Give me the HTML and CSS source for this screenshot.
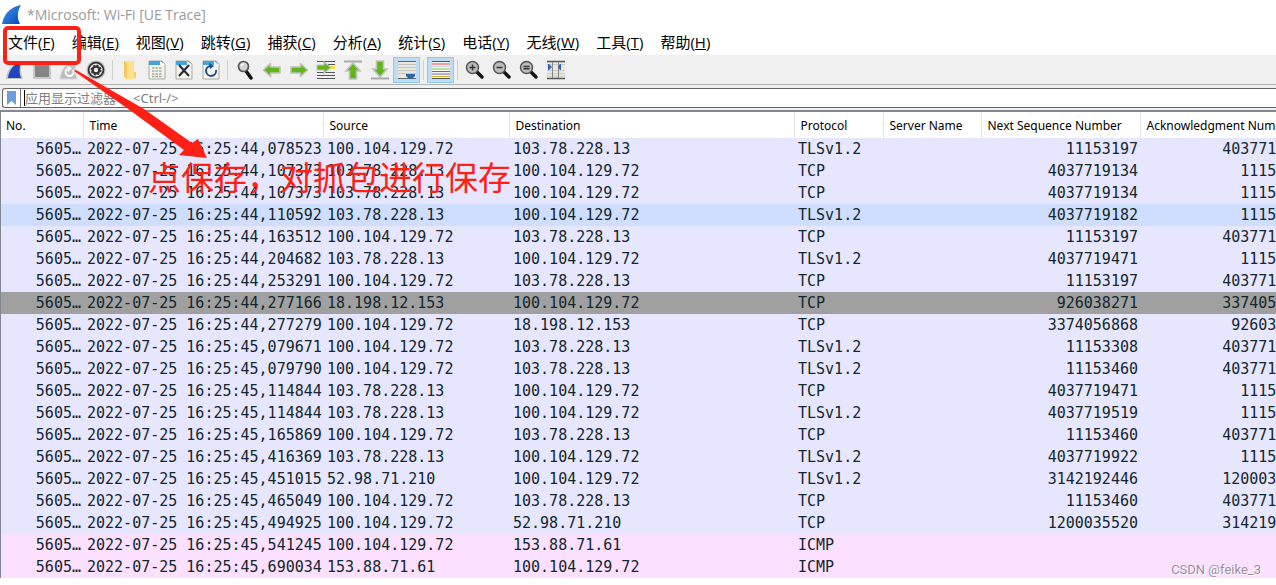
FILE: index.html
```
<!DOCTYPE html>
<html lang="zh-CN">
<head>
<meta charset="utf-8">
<title>*Microsoft: Wi-Fi [UE Trace]</title>
<link rel="stylesheet" href="styles.css">
</head>
<body>
<div class="app">
  <header class="titlebar">
    <svg class="logo" width="20" height="20" viewBox="0 0 20 20" aria-hidden="true">
      <defs><linearGradient id="fin" x1="0" y1="0" x2="1" y2="1"><stop offset="0" stop-color="#3f9bea"/><stop offset="1" stop-color="#0a45b8"/></linearGradient></defs>
      <path d="M0 19C2 9 8 2 19 0C15 7 15 13 18 19Z" fill="url(#fin)"/>
    </svg>
    <h1 class="title">*Microsoft: Wi-Fi [UE Trace]</h1>
  </header>

  <nav class="menubar">
    <button class="menu">文件(<u>F</u>)</button>
    <button class="menu">编辑(<u>E</u>)</button>
    <button class="menu">视图(<u>V</u>)</button>
    <button class="menu">跳转(<u>G</u>)</button>
    <button class="menu">捕获(<u>C</u>)</button>
    <button class="menu">分析(<u>A</u>)</button>
    <button class="menu">统计(<u>S</u>)</button>
    <button class="menu">电话(<u>Y</u>)</button>
    <button class="menu">无线(<u>W</u>)</button>
    <button class="menu">工具(<u>T</u>)</button>
    <button class="menu">帮助(<u>H</u>)</button>
  </nav>

  <div class="toolbar" role="toolbar">
    <button class="tool" aria-label="开始捕获"><svg viewBox="0 0 20 20"><path d="M1 19C2 9 8 2 18 1C15 7 16 13 18 19Z" fill="#c4c4c4"/><path d="M3 18C4 10 9 4 16 2C14 8 14 13 16 18Z" fill="#2046c0"/></svg></button>
    <button class="tool" aria-label="停止捕获"><svg viewBox="0 0 20 20"><path d="M1 1H19V19H1Z" fill="#c8c8c8"/><path d="M3 3H17V17H3Z" fill="#858585"/></svg></button>
    <button class="tool" aria-label="重新捕获"><svg viewBox="0 0 20 20"><path d="M1 19C2 9 8 2 18 1C15 7 16 13 18 19Z" fill="#bdbdbd" stroke="#d8d8d8"/><path d="M8 9A4 4 0 1 0 14 10" fill="none" stroke="#fff" stroke-width="2"/><path d="M8 6L13 8L9 12Z" fill="#fff"/></svg></button>
    <button class="tool" aria-label="捕获选项"><svg viewBox="0 0 20 20"><circle cx="10" cy="10" r="9.5" fill="#bbb"/><circle cx="10" cy="10" r="7.4" fill="#eee" stroke="#333" stroke-width="1.8"/><circle cx="10" cy="10" r="3.4" fill="none" stroke="#333" stroke-width="2.4"/><circle cx="10" cy="10" r="4.800" fill="none" stroke="#333" stroke-width="1.4" stroke-dasharray="2 1.77"/></svg></button>
    <span class="sep"></span>
    <button class="tool" aria-label="打开"><svg viewBox="0 0 20 20"><path d="M4 1H14V19H7L4 17Z" fill="#ffe08a"/><path d="M4 1L7 3V19L4 17Z" fill="#f3c75c"/><path d="M14 12H16V18H14Z" fill="#f7ce68"/></svg></button>
    <button class="tool" aria-label="保存"><svg viewBox="0 0 20 20"><use href="#doc"/><path d="M5 8H15M5 11H15M5 14H15M5 16.500H15" stroke="#a9aaa2" stroke-width="1.400" stroke-dasharray="2.500 1"/></svg></button>
    <button class="tool" aria-label="关闭"><svg viewBox="0 0 20 20"><use href="#doc"/><path d="M5 5L15 16M15 5L5 16" stroke="#24292f" stroke-width="2"/></svg></button>
    <button class="tool" aria-label="重新加载"><svg viewBox="0 0 20 20"><use href="#doc"/><path d="M9 6A5 5 0 1 0 15 10" fill="none" stroke="#1d4d86" stroke-width="2"/><path d="M8 3L13 6L9 9Z" fill="#1d4d86"/></svg></button>
    <span class="sep"></span>
    <button class="tool" aria-label="查找"><svg viewBox="0 0 20 20"><path d="M11 11L16 18" stroke="#111" stroke-width="3.500" stroke-linecap="round"/><circle cx="8.500" cy="6.500" r="5" fill="#d2d4d6" stroke="#555" stroke-width="1.700"/><path d="M6 6A3 3 0 0 1 9 4" stroke="#fff" fill="none" stroke-width="1.500"/></svg></button>
    <button class="tool" aria-label="后退"><svg viewBox="0 0 20 20"><path id="arrow" d="M1.500 10L8.500 3.500V7H18V13H8.500V16.500Z" fill="#62b51a" stroke="#bfc3bb" stroke-width="1.600" stroke-linejoin="round"/></svg></button>
    <button class="tool" aria-label="前进"><svg viewBox="0 0 20 20"><use href="#arrow" transform="rotate(180 10 10)"/></svg></button>
    <button class="tool" aria-label="转到分组"><svg viewBox="0 0 20 20"><path d="M1 1.500H19M9 4.500H19M1 12.500H19M1 15.500H19M1 18.500H19" stroke="#555"/><path d="M13 7.500H19" stroke="#ffe13c" stroke-width="3"/><path d="M1 5H8V2L15 7.500L8 13V10H1Z" fill="#62b51a" stroke="#bfc3bb" stroke-width="1.200"/></svg></button>
    <button class="tool" aria-label="首个分组"><svg viewBox="0 0 20 20"><path d="M1 1.500H19" stroke="#aaa" stroke-width="2"/><path d="M10 3L17 11H13.500V19H6.500V11H3Z" fill="#62b51a" stroke="#bfc3bb" stroke-width="1.600"/></svg></button>
    <button class="tool" aria-label="最新分组"><svg viewBox="0 0 20 20"><path d="M1 18.500H19" stroke="#aaa" stroke-width="2"/><path d="M10 17L17 9H13.500V1H6.500V9H3Z" fill="#62b51a" stroke="#bfc3bb" stroke-width="1.600"/></svg></button>
    <button class="tool on" aria-label="自动滚动" aria-pressed="true"><svg viewBox="0 0 20 20"><path d="M1 1H19V19H1Z" fill="#e8e8e2"/><path d="M1 4.500H19M1 7.500H19M1 10.500H19M1 13.500H19" stroke="#c2c4bd"/><path d="M1 1.500H19M1 18.500H19" stroke="#666"/><path d="M9 14H18V16L15 19H12L9 16Z" fill="#2d65ad"/></svg></button>
    <span class="sep"></span>
    <button class="tool on" aria-label="着色" aria-pressed="true"><svg viewBox="0 0 20 20"><path d="M1 1H19V19H1Z" fill="#f4f4f2"/><path d="M1 1.500H19M1 18.500H19" stroke="#555"/><path d="M1 4H19" stroke="#ee4b4b"/><path d="M1 6.500H19" stroke="#c9d0e8"/><path d="M1 9H19" stroke="#7ed23a"/><path d="M1 11.500H19" stroke="#4f74b5"/><path d="M1 14H19" stroke="#8a6a9e"/><path d="M1 16.500H19" stroke="#d9b22c"/></svg></button>
    <span class="sep"></span>
    <button class="tool" aria-label="放大"><svg viewBox="0 0 20 20"><use href="#lens"/><path d="M4.500 7.500H10.500M7.500 4.500V10.500" stroke="#333" stroke-width="1.500"/></svg></button>
    <button class="tool" aria-label="缩小"><svg viewBox="0 0 20 20"><use href="#lens"/><path d="M4.500 7.500H10.500" stroke="#333" stroke-width="1.500"/></svg></button>
    <button class="tool" aria-label="正常大小"><svg viewBox="0 0 20 20"><use href="#lens"/><path d="M4.500 6.500H10.500M4.500 8.800H10.500" stroke="#333" stroke-width="1.500"/></svg></button>
    <button class="tool" aria-label="调整列宽"><svg viewBox="0 0 20 20"><path d="M1 1H19V19H1Z" fill="#e8e8e2"/><path d="M1 4.500H19M1 10.500H19M1 13.500H19M1 16H19" stroke="#cccec6"/><path d="M1 1.500H19M1 18.500H19" stroke="#555" stroke-width="1.500"/><path d="M6.500 2V18M12.500 2V18" stroke="#888"/><path d="M2 4H3L6 7L3 10H2ZM15 4H14L12 7L14 10H15Z" fill="#2d65ad"/></svg></button>
  </div>

  <div class="filterbar">
    <div class="filter">
      <button class="bookmark" aria-label="书签"><svg width="9" height="14" viewBox="0 0 9 14"><path d="M0 0H9V14L4.500 10L0 14Z" fill="#6e9fd4"/></svg></button>
      <input class="filter-input" type="text" aria-label="应用显示过滤器" placeholder="应用显示过滤器 … &lt;Ctrl-/&gt;">
    </div>
  </div>

  <main class="packets">
    <table class="list">
      <colgroup><col class="c-no"><col class="c-time"><col class="c-src"><col class="c-dst"><col class="c-proto"><col class="c-server"><col class="c-seq"><col class="c-ack"></colgroup>
      <thead><tr><th>No.</th><th>Time</th><th>Source</th><th>Destination</th><th>Protocol</th><th>Server Name</th><th>Next Sequence Number</th><th>Acknowledgment Number</th></tr></thead>
      <tbody>
        <tr><td>5605…</td><td>2022-07-25 16:25:44,078523</td><td>100.104.129.72</td><td>103.78.228.13</td><td>TLSv1.2</td><td></td><td>11153197</td><td>4037719134</td></tr>
        <tr><td>5605…</td><td>2022-07-25 16:25:44,107373</td><td>103.78.228.13</td><td>100.104.129.72</td><td>TCP</td><td></td><td>4037719134</td><td>11153197</td></tr>
        <tr><td>5605…</td><td>2022-07-25 16:25:44,107373</td><td>103.78.228.13</td><td>100.104.129.72</td><td>TCP</td><td></td><td>4037719134</td><td>11153197</td></tr>
        <tr class="hover"><td>5605…</td><td>2022-07-25 16:25:44,110592</td><td>103.78.228.13</td><td>100.104.129.72</td><td>TLSv1.2</td><td></td><td>4037719182</td><td>11153197</td></tr>
        <tr><td>5605…</td><td>2022-07-25 16:25:44,163512</td><td>100.104.129.72</td><td>103.78.228.13</td><td>TCP</td><td></td><td>11153197</td><td>4037719182</td></tr>
        <tr><td>5605…</td><td>2022-07-25 16:25:44,204682</td><td>103.78.228.13</td><td>100.104.129.72</td><td>TLSv1.2</td><td></td><td>4037719471</td><td>11153197</td></tr>
        <tr><td>5605…</td><td>2022-07-25 16:25:44,253291</td><td>100.104.129.72</td><td>103.78.228.13</td><td>TCP</td><td></td><td>11153197</td><td>4037719471</td></tr>
        <tr class="syn"><td>5605…</td><td>2022-07-25 16:25:44,277166</td><td>18.198.12.153</td><td>100.104.129.72</td><td>TCP</td><td></td><td>926038271</td><td>3374056868</td></tr>
        <tr><td>5605…</td><td>2022-07-25 16:25:44,277279</td><td>100.104.129.72</td><td>18.198.12.153</td><td>TCP</td><td></td><td>3374056868</td><td>926038271</td></tr>
        <tr><td>5605…</td><td>2022-07-25 16:25:45,079671</td><td>100.104.129.72</td><td>103.78.228.13</td><td>TLSv1.2</td><td></td><td>11153308</td><td>4037719471</td></tr>
        <tr><td>5605…</td><td>2022-07-25 16:25:45,079790</td><td>100.104.129.72</td><td>103.78.228.13</td><td>TLSv1.2</td><td></td><td>11153460</td><td>4037719471</td></tr>
        <tr><td>5605…</td><td>2022-07-25 16:25:45,114844</td><td>103.78.228.13</td><td>100.104.129.72</td><td>TCP</td><td></td><td>4037719471</td><td>11153460</td></tr>
        <tr><td>5605…</td><td>2022-07-25 16:25:45,114844</td><td>103.78.228.13</td><td>100.104.129.72</td><td>TLSv1.2</td><td></td><td>4037719519</td><td>11153460</td></tr>
        <tr><td>5605…</td><td>2022-07-25 16:25:45,165869</td><td>100.104.129.72</td><td>103.78.228.13</td><td>TCP</td><td></td><td>11153460</td><td>4037719519</td></tr>
        <tr><td>5605…</td><td>2022-07-25 16:25:45,416369</td><td>103.78.228.13</td><td>100.104.129.72</td><td>TLSv1.2</td><td></td><td>4037719922</td><td>11153460</td></tr>
        <tr><td>5605…</td><td>2022-07-25 16:25:45,451015</td><td>52.98.71.210</td><td>100.104.129.72</td><td>TLSv1.2</td><td></td><td>3142192446</td><td>1200035520</td></tr>
        <tr><td>5605…</td><td>2022-07-25 16:25:45,465049</td><td>100.104.129.72</td><td>103.78.228.13</td><td>TCP</td><td></td><td>11153460</td><td>4037719922</td></tr>
        <tr><td>5605…</td><td>2022-07-25 16:25:45,494925</td><td>100.104.129.72</td><td>52.98.71.210</td><td>TCP</td><td></td><td>1200035520</td><td>3142192446</td></tr>
        <tr class="icmp"><td>5605…</td><td>2022-07-25 16:25:45,541245</td><td>100.104.129.72</td><td>153.88.71.61</td><td>ICMP</td><td></td><td></td><td></td></tr>
        <tr class="icmp"><td>5605…</td><td>2022-07-25 16:25:45,690034</td><td>153.88.71.61</td><td>100.104.129.72</td><td>ICMP</td><td></td><td></td><td></td></tr>
      </tbody>
    </table>
  </main>

  <div class="mark-box"></div>
  <svg class="mark-arrow" width="140" height="92" viewBox="70 68 140 92" aria-hidden="true"><path d="M74 71L76 70L144 109L192 143L198 139L207 158L179 155L184 150L131 111Z" fill="#ff2015"/></svg>
  <p class="mark-text">点保存，对抓包进行保存</p>
  <p class="watermark">CSDN @feike_3</p>
</div>

<svg class="defs" width="0" height="0" aria-hidden="true">
  <defs>
    <g id="doc"><path d="M2 1H15L18 4V19H2Z" fill="#f3f4ea" stroke="#a9aba5"/><path d="M2 1H15L17 5H2Z" fill="#45a3dc"/><path d="M13 1L18 5H13Z" fill="#fff"/></g>
    <g id="lens"><path d="M12 12L17 17" stroke="#151515" stroke-width="3.500" stroke-linecap="round"/><circle cx="7.500" cy="7.500" r="6" fill="#b9bbbc" stroke="#555" stroke-width="1.500"/></g>
  </defs>
</svg>
</body>
</html>
```
FILE: styles.css
```
* { box-sizing: border-box; }
body { margin: 0; background: #fff; overflow: hidden; }
button { border: 0; padding: 0; background: none; color: inherit; font: inherit; }
.defs { position: absolute; }

.app {
  position: relative;
  min-height: 100vh;
  overflow: hidden;
  font-family: "Open Sans", "Noto Sans CJK SC", sans-serif;
}

.titlebar { display: flex; align-items: center; gap: 5px; height: 29px; padding-left: 2px; }
.title { margin: 0; font-size: 14px; font-weight: 400; color: #999; }

.menubar {
  display: flex;
  align-items: center;
  gap: 17px;
  height: 27px;
  padding-left: 8px;
  border-bottom: 1px solid #f0f0f0;
  font-size: 15px;
  color: #000;
  white-space: nowrap;
}
.menu { line-height: 24px; }

.toolbar {
  display: flex;
  align-items: center;
  height: 29px;
  padding-left: 1px;
  background: #f0f0f0;
  border-bottom: 1px solid #b4b4b4;
}
.tool {
  display: flex;
  align-items: center;
  justify-content: center;
  width: 27px;
  height: 26px;
  border: 1px solid transparent;
}
.tool svg { width: 20px; height: 20px; }
.tool.on { background: #c0dcf3; border-color: #90c8f6; }
.sep { width: 1px; height: 20px; margin: 0 3px; background: #cfcfcf; }

.filterbar { padding: 3px 0 2px; background: #f0f0f0; }
.filter {
  display: flex;
  height: 20px;
  margin-left: 2px;
  border: 1px solid #666;
  border-right: 0;
  border-radius: 3px 0 0 3px;
  background: #fff;
}
.bookmark {
  display: flex;
  align-items: center;
  justify-content: center;
  width: 18px;
  border-right: 1px solid #777;
}
.filter-input {
  flex: 1;
  min-width: 0;
  margin: 1px 0 1px 3px;
  padding: 0;
  border: 0;
  border-left: 1px solid #000;
  outline: 0;
  background: none;
  font: 13px "Noto Sans", "Noto Sans CJK SC", sans-serif;
}
.filter-input::placeholder { color: #808080; opacity: 1; }

.packets { border-top: 2px solid #828790; border-left: 1px solid #828790; overflow: hidden; }
.list { width: 1314px; table-layout: fixed; border-collapse: collapse; }
.c-no { width: 82px; }
.c-time { width: 240px; }
.c-src { width: 186px; }
.c-dst { width: 285px; }
.c-proto { width: 89px; }
.c-server { width: 98px; }
.c-seq { width: 159px; }

th {
  height: 26px;
  padding: 0 5px 0 6px;
  border-right: 1px solid #e5e5e5;
  font: 400 12px "Noto Sans", sans-serif;
  color: #000;
  text-align: left;
  white-space: nowrap;
}
th:first-child { padding-left: 5px; }
td {
  height: 22px;
  padding: 0 2px 0 4px;
  font: 15px/22px "DejaVu Sans Mono", monospace;
  color: #12272e;
  white-space: nowrap;
}
td:first-child, td:nth-child(7), td:nth-child(8) { text-align: right; }
tbody tr { background: #e7e6ff; }
tbody .hover { background: #cfddff; }
tbody .syn { background: #a0a0a0; }
tbody .icmp { background: #fce0ff; }

.mark-box {
  position: absolute;
  left: 3px;
  top: 26px;
  width: 78px;
  height: 39px;
  border: 4px solid #ff2015;
  border-radius: 5px;
}
.mark-arrow { position: absolute; left: 70px; top: 68px; }
.mark-text {
  position: absolute;
  left: 148px;
  top: 152px;
  margin: 0;
  font: 33px/48px "Noto Sans CJK SC", sans-serif;
  color: #ff2015;
  white-space: nowrap;
}
.watermark {
  position: absolute;
  right: 15px;
  bottom: 6px;
  margin: 0;
  font: 13px/18px Roboto, sans-serif;
  color: #96909a;
  text-shadow: 1px 1px 0 #fff;
}
```
